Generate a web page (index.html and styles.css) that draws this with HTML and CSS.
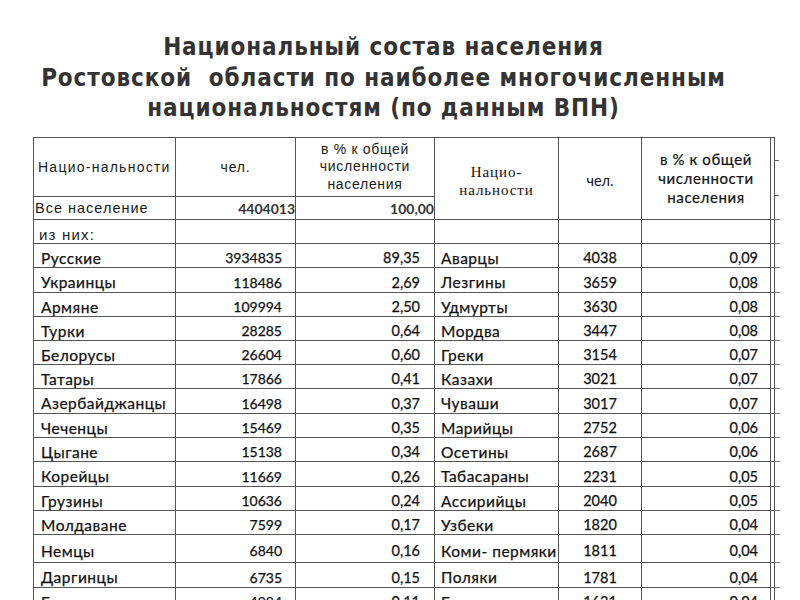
FILE: index.html
```html
<!DOCTYPE html>
<html lang="ru">
<head>
<meta charset="utf-8">
<title>Национальный состав населения Ростовской области</title>
<link rel="stylesheet" href="styles.css">
</head>
<body>
<div class="title">
  <div>Национальный состав населения</div>
  <div>Ростовской&nbsp; области по наиболее многочисленным</div>
  <div>национальностям (по данным ВПН)</div>
</div>
<table class="grid">
  <colgroup>
    <col class="c1"><col class="c2"><col class="c3"><col class="c4"><col class="c5"><col class="c6"><col class="c7"><col class="c8">
  </colgroup>
  <tr class="h1">
    <td class="hname">Нацио-нальности</td>
    <td class="hchel">чел.</td>
    <td class="hpct">в % к общей<br>численности<br>населения</td>
    <td class="hname2" rowspan="2">Нацио-<br>нальности</td>
    <td class="hchel2" rowspan="2">чел.</td>
    <td class="hpct2" rowspan="2">в % к общей<br>численности<br>населения</td>
    <td class="thin" rowspan="2"></td>
    <td class="tick htick" rowspan="2"></td>
  </tr>
  <tr class="h2">
    <td class="all">Все население</td>
    <td class="allnum">4404013</td>
    <td class="allpct">100,00</td>
  </tr>
  <tr class="h3">
    <td class="sub">из них:</td><td></td><td></td><td></td><td></td><td></td><td class="thin"></td><td class="tick"></td>
  </tr>
  <tr><td class="n">Русские</td><td class="num">3934835</td><td class="pct">89,35</td><td class="n2">Аварцы</td><td class="num2">4038</td><td class="pct2">0,09</td><td class="thin"></td><td class="tick"></td></tr>
  <tr class="r25"><td class="n">Украинцы</td><td class="num">118486</td><td class="pct">2,69</td><td class="n2">Лезгины</td><td class="num2">3659</td><td class="pct2">0,08</td><td class="thin"></td><td class="tick"></td></tr>
  <tr><td class="n">Армяне</td><td class="num">109994</td><td class="pct">2,50</td><td class="n2">Удмурты</td><td class="num2">3630</td><td class="pct2">0,08</td><td class="thin"></td><td class="tick"></td></tr>
  <tr><td class="n">Турки</td><td class="num">28285</td><td class="pct">0,64</td><td class="n2">Мордва</td><td class="num2">3447</td><td class="pct2">0,08</td><td class="thin"></td><td class="tick"></td></tr>
  <tr><td class="n">Белорусы</td><td class="num">26604</td><td class="pct">0,60</td><td class="n2">Греки</td><td class="num2">3154</td><td class="pct2">0,07</td><td class="thin"></td><td class="tick"></td></tr>
  <tr><td class="n">Татары</td><td class="num">17866</td><td class="pct">0,41</td><td class="n2">Казахи</td><td class="num2">3021</td><td class="pct2">0,07</td><td class="thin"></td><td class="tick"></td></tr>
  <tr class="r25"><td class="n">Азербайджанцы</td><td class="num">16498</td><td class="pct">0,37</td><td class="n2">Чуваши</td><td class="num2">3017</td><td class="pct2">0,07</td><td class="thin"></td><td class="tick"></td></tr>
  <tr><td class="n">Чеченцы</td><td class="num">15469</td><td class="pct">0,35</td><td class="n2">Марийцы</td><td class="num2">2752</td><td class="pct2">0,06</td><td class="thin"></td><td class="tick"></td></tr>
  <tr><td class="n">Цыгане</td><td class="num">15138</td><td class="pct">0,34</td><td class="n2">Осетины</td><td class="num2">2687</td><td class="pct2">0,06</td><td class="thin"></td><td class="tick"></td></tr>
  <tr class="r25"><td class="n">Корейцы</td><td class="num">11669</td><td class="pct">0,26</td><td class="n2">Табасараны</td><td class="num2">2231</td><td class="pct2">0,05</td><td class="thin"></td><td class="tick"></td></tr>
  <tr><td class="n">Грузины</td><td class="num">10636</td><td class="pct">0,24</td><td class="n2">Ассирийцы</td><td class="num2">2040</td><td class="pct2">0,05</td><td class="thin"></td><td class="tick"></td></tr>
  <tr><td class="n">Молдаване</td><td class="num">7599</td><td class="pct">0,17</td><td class="n2">Узбеки</td><td class="num2">1820</td><td class="pct2">0,04</td><td class="thin"></td><td class="tick"></td></tr>
  <tr class="r28"><td class="n">Немцы</td><td class="num">6840</td><td class="pct">0,16</td><td class="n2">Коми- пермяки</td><td class="num2">1811</td><td class="pct2">0,04</td><td class="thin"></td><td class="tick"></td></tr>
  <tr class="r25"><td class="n">Даргинцы</td><td class="num">6735</td><td class="pct">0,15</td><td class="n2">Поляки</td><td class="num2">1781</td><td class="pct2">0,04</td><td class="thin"></td><td class="tick"></td></tr>
  <tr><td class="n">Евреи</td><td class="num">4984</td><td class="pct">0,11</td><td class="n2">Езиды</td><td class="num2">1631</td><td class="pct2">0,04</td><td class="thin"></td><td class="tick"></td></tr>
</table>
</body>
</html>
```
FILE: styles.css
```css
html, body {
  margin: 0;
  padding: 0;
  background: #ffffff;
  overflow: hidden;
}
body {
  width: 800px;
  height: 600px;
}
.title {
  padding: 32px 33px 0 0;
  text-align: center;
  font-family: "DejaVu Sans Condensed", "DejaVu Sans", "Liberation Sans", sans-serif;
  font-stretch: condensed;
  font-weight: bold;
  font-size: 24px;
  letter-spacing: 0.9px;
  line-height: 30.5px;
  color: #333333;
  height: 105px;
}
.grid {
  margin-left: 33px;
  border-collapse: collapse;
  table-layout: fixed;
  width: 746px;
  color: #111111;
  font-family: Lato, "Liberation Sans", sans-serif;
  font-size: 15px;
}
.c1 { width: 142px; }
.c2 { width: 120px; }
.c3 { width: 139px; }
.c4 { width: 124px; }
.c5 { width: 83px; }
.c6 { width: 129px; }
.c7 { width: 4px; }
.c8 { width: 5px; }
.grid td {
  border: 1px solid #555555;
  padding: 0;
  height: 23px;
  vertical-align: middle;
  white-space: nowrap;
  overflow: visible;
}
.grid td.tick {
  border-left: 1px solid #555555;
  border-right: none;
  border-bottom: none;
  border-top: 1px solid #777777;
}
.grid td.htick {
  border-top: none;
  background:
    linear-gradient(#666666, #666666) no-repeat 0 22px / 4px 1px,
    linear-gradient(#666666, #666666) no-repeat 0 57px / 4px 1px;
}
.grid tr.h1 td { height: 58px; }
.grid tr.h2 td { height: 22px; }
.grid tr.r25 td { height: 24px; }
.grid tr.r28 td { height: 27px; }
.hname, .hchel, .all, .sub {
  font-family: "Liberation Sans", Arial, sans-serif;
  font-size: 14px;
  letter-spacing: 0.8px;
  color: #1a1a1a;
}
.hname { padding-left: 4px !important; letter-spacing: 1.25px; }
.hchel { text-align: center; font-size: 14px; }
.hpct {
  text-align: center;
  font-family: "Liberation Sans", Arial, sans-serif;
  font-size: 14px;
  letter-spacing: 0.7px;
  line-height: 17.5px;
  color: #1a1a1a;
}
.hname2 {
  text-align: center;
  font-family: "Liberation Serif", "DejaVu Serif", serif;
  font-size: 15px;
  letter-spacing: 0.9px;
  line-height: 18px;
  padding-top: 5px !important;
}
.hchel2 {
  text-align: center;
  font-size: 14.5px;
  padding-top: 4px !important;
}
.hpct2 {
  text-align: center;
  font-size: 15px;
  line-height: 19px;
  letter-spacing: 0.6px;
  -webkit-text-stroke: 0.2px #111111;
}
.all { padding-left: 1px !important; font-size: 14.5px; letter-spacing: 1px; }
.allnum, .allpct {
  text-align: right;
  font-weight: bold;
  font-size: 14px;
  color: #333;
}
.allnum { padding-right: 0 !important; }
.allpct { padding-right: 0 !important; }
.sub { padding-left: 5px !important; font-size: 15px; letter-spacing: 1.2px; vertical-align: bottom !important; }
.n, .n2, .num, .pct, .num2, .pct2 {
  -webkit-text-stroke: 0.25px #111111;
}
.grid tr td.n, .grid tr td.n2, .grid tr td.num, .grid tr td.pct, .grid tr td.num2, .grid tr td.pct2 {
  padding-top: 4px;
  height: 19px;
}
.grid tr.r25 td.n, .grid tr.r25 td.n2, .grid tr.r25 td.num, .grid tr.r25 td.pct, .grid tr.r25 td.num2, .grid tr.r25 td.pct2 {
  height: 20px;
}
.grid tr.r28 td.n, .grid tr.r28 td.n2, .grid tr.r28 td.num, .grid tr.r28 td.pct, .grid tr.r28 td.num2, .grid tr.r28 td.pct2 {
  height: 23px;
}
.n, .n2 {
  font-size: 15.5px;
  letter-spacing: 0.5px;
}
.grid tr td.n { padding-left: 7px; }
.grid tr td.n2 { padding-left: 6px; }
.grid tr td.num { text-align: right; padding-right: 13px; font-size: 14px; }
.grid tr td.pct { text-align: right; padding-right: 14px; font-size: 14.5px; }
.num2 { text-align: center; font-size: 14.5px; }
.grid tr td.pct2 { text-align: right; padding-right: 12px; font-size: 14.5px; }
```
